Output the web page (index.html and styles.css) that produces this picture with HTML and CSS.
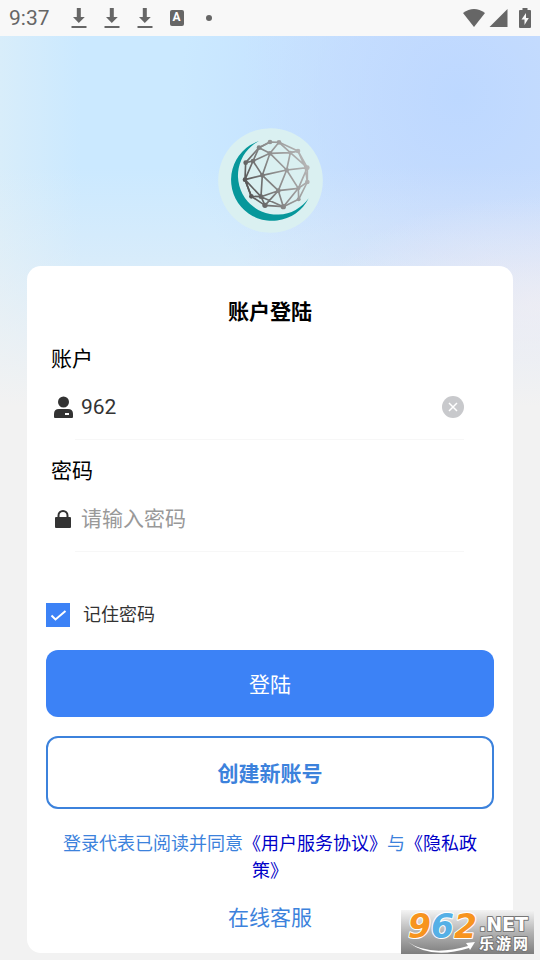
FILE: index.html
```html
<!DOCTYPE html>
<html lang="zh-CN">
<head>
    <meta charset="UTF-8">
    <meta name="viewport" content="width=device-width, initial-scale=1.0">
    <title>账户登陆</title>
    <link rel="stylesheet" href="styles.css">
</head>
<body>

    <!-- Barra de estado -->
    <header class="status-bar">
        <span class="time">9:37</span>
        <div class="status-left">
            <svg class="status-icon" viewBox="0 0 16 22"><path d="M5.800 1h4v9h4L7.800 16 2 10h3.800zM.5 19h15v2H.5z"/></svg>
            <svg class="status-icon" viewBox="0 0 16 22"><path d="M5.800 1h4v9h4L7.800 16 2 10h3.800zM.5 19h15v2H.5z"/></svg>
            <svg class="status-icon" viewBox="0 0 16 22"><path d="M5.800 1h4v9h4L7.800 16 2 10h3.800zM.5 19h15v2H.5z"/></svg>
            <span class="badge-a">A</span>
            <span class="dot"></span>
        </div>
        <div class="status-right">
            <svg width="24" height="20" viewBox="0 0 24 20"><path d="M1 5Q12-3 23 5L12 19z"/></svg>
            <svg width="19" height="20" viewBox="0 0 19 20"><path d="M18.500 1v18H.5z"/></svg>
            <svg class="battery" width="12" height="20" viewBox="0 0 12 20"><path fill-rule="evenodd" d="M3.500 0h5v2H11q1 0 1 1v16q0 1-1 1H1q-1 0-1-1V3q0-1 1-1h2.500zM7 5l-4.500 6.500h3V17L9.800 10H7z"/></svg>
        </div>
    </header>

    <main class="page">
        <svg class="logo" viewBox="24 24 315 315" role="img" aria-label="Logo">
            <defs>
                <linearGradient id="metal" gradientUnits="userSpaceOnUse" x1="105" y1="200" x2="290" y2="130">
                    <stop offset="0" stop-color="#555"/>
                    <stop offset="0.5" stop-color="#8d8d8d"/>
                    <stop offset="1" stop-color="#b5b5b5"/>
                </linearGradient>
            </defs>
            <circle cx="181.500" cy="181.500" r="157" fill="#daf0f1"/>
            <path fill="#07979b" d="M147 63A123 123 0 1 0 296 235A117 117 0 1 1 147 63z"/>
            <g fill="none" stroke="url(#metal)" stroke-width="5" stroke-linejoin="round">
                <path d="M180 66L207 67 264 93 292 143 292 186 266 238 220 260 165 256 124 229 105 179 107 128 147 83z"/>
                <path d="M147 83L180 100 207 67 241 98 264 93M180 66L147 83 129 123 107 128M180 100L241 98 230 150 180 100 129 123 157 166 180 100"/>
                <path d="M241 98L292 143 230 150 265 205 292 143M157 166L230 150 205 212 157 166 105 179 129 123M241 98L264 93 286 143 292 186 265 205 266 238"/>
                <path d="M157 166L153 230 105 179M153 230L205 212 265 205 220 260 205 212 165 256 153 230 124 229M153 230L220 260M105 179L124 229"/>
            </g>
            <g fill="url(#metal)">
                <circle cx="180" cy="66" r="7"/><circle cx="207" cy="67" r="7"/><circle cx="147" cy="83" r="7"/>
                <circle cx="264" cy="93" r="7"/><circle cx="241" cy="98" r="6"/><circle cx="180" cy="100" r="7"/>
                <circle cx="107" cy="128" r="7"/><circle cx="129" cy="123" r="7"/><circle cx="230" cy="150" r="7"/>
                <circle cx="292" cy="143" r="7"/><circle cx="157" cy="166" r="7"/><circle cx="105" cy="179" r="7"/>
                <circle cx="292" cy="186" r="7"/><circle cx="265" cy="205" r="6"/><circle cx="205" cy="212" r="7"/>
                <circle cx="124" cy="229" r="7"/><circle cx="153" cy="230" r="7"/><circle cx="266" cy="238" r="6"/>
                <circle cx="165" cy="256" r="8"/><circle cx="220" cy="260" r="8"/>
            </g>
        </svg>

        <form class="card">
            <h1>账户登陆</h1>

            <div class="field">
                <label for="usuario">账户</label>
                <div class="row">
                    <svg class="field-icon" viewBox="0 0 24 24"><circle cx="12.500" cy="6" r="5.500"/><path fill-rule="evenodd" d="M3 21v-3q0-5 5-5h9q5 0 5 5v3q0 1-1 1H4q-1 0-1-1zM14 17v2h4v-2z"/></svg>
                    <div class="line">
                        <input type="text" id="usuario" value="962">
                        <button type="button" class="clear" aria-label="清除">
                            <svg viewBox="0 0 22 22"><path d="M7 7l8 8M15 7l-8 8"/></svg>
                        </button>
                    </div>
                </div>
            </div>

            <div class="field">
                <label for="password">密码</label>
                <div class="row">
                    <svg class="field-icon" viewBox="0 0 24 24"><path d="M5 9h14q1 0 1 1v9q0 1-1 1H5q-1 0-1-1v-9q0-1 1-1z"/><path class="shackle" d="M7.500 10V7.500a4.500 4.500 0 0 1 9 0V10"/></svg>
                    <div class="line">
                        <input type="password" id="password" placeholder="请输入密码">
                    </div>
                </div>
            </div>

            <div class="remember">
                <input type="checkbox" id="recordar" checked>
                <label for="recordar">记住密码</label>
            </div>

            <button type="submit" class="btn btn-login">登陆</button>
            <button type="button" class="btn btn-create">创建新账号</button>

            <p class="terms">登录代表已阅读并同意<a href="#">《用户服务协议》</a>与<a href="#">《隐私政策》</a></p>
            <a class="service" href="#">在线客服</a>
        </form>
    </main>

    <!-- Marca de agua -->
    <svg class="watermark" viewBox="0 0 133 44">
        <defs>
            <linearGradient id="shade" x1="0" y1="0" x2="0" y2="1">
                <stop offset="0" stop-color="#f4f4f4"/>
                <stop offset="0.5" stop-color="#b4b4b4"/>
                <stop offset="1" stop-color="#7e7e7e"/>
            </linearGradient>
        </defs>
        <rect width="133" height="44" fill="url(#shade)"/>
        <path class="swoosh" d="M7 32Q29 47 67 36L65 33 74 32 69 40 68 38Q30 50 7 32z"/>
        <text class="wm-number" x="7" y="28"><tspan class="orange">9</tspan><tspan class="blue">6</tspan><tspan class="orange">2</tspan></text>
        <text class="wm-net" x="78" y="21">.NET</text>
        <text class="wm-name" x="78 95 112" y="39">乐游网</text>
    </svg>

</body>
</html>
```

FILE: styles.css
```css
* {
    box-sizing: border-box;
}
body {
    margin: 0;
    min-height: 100vh;
    font-family: Roboto, "Noto Sans CJK SC", sans-serif;
    font-size: 21px;
    background-color: #f2f2f2;
}

/* Barra de estado */
.status-bar {
    display: flex;
    align-items: center;
    height: 36px;
    padding: 0 9px;
    background-color: #f8f8f8;
    color: #666;
    fill: #666;
}
.status-left {
    display: flex;
    align-items: center;
    gap: 17px;
    margin-left: 21px;
}
.status-icon {
    width: 16px;
    height: 22px;
}
.badge-a {
    width: 14px;
    height: 16px;
    border-radius: 2px;
    background-color: #666;
    color: #fff;
    font-size: 12px;
    font-weight: bold;
    line-height: 15px;
    text-align: center;
}
.dot {
    width: 6px;
    height: 6px;
    margin-left: 5px;
    border-radius: 50%;
    background-color: #666;
}
.status-right {
    display: flex;
    align-items: center;
    gap: 3px;
    margin-left: auto;
}
.battery {
    margin-left: 8px;
}

.page {
    padding: 92px 27px 7px;
    background-image:
        linear-gradient(to bottom, rgba(242, 242, 242, 0) 130px, rgba(242, 242, 242, 0.3) 220px, #f2f2f2 370px),
        radial-gradient(ellipse at 100% 270px, rgba(240, 234, 244, 0.7) 0, rgba(240, 234, 244, 0) 220px),
        radial-gradient(circle at 85% 60px, #bdd8ff 0, rgba(189, 216, 255, 0) 280px),
        linear-gradient(to right, #d8edfa 0, #cbe9ff 15%, #cbe9ff 45%, #cfe0fd 80%);
    background-size: 100% 400px;
    background-repeat: no-repeat;
}
.logo {
    display: block;
    width: 105px;
    height: 105px;
    margin: 0 auto 33px;
}
.card {
    padding: 31px 19px 20px;
    border-radius: 14px;
    background-color: #fff;
}
h1 {
    margin: 0;
    font-size: 21px;
    line-height: 31px;
    text-align: center;
}

/* Campos */
.field {
    margin-top: 16px;
    padding: 0 30px 0 5px;
}
.field label {
    display: block;
    line-height: 31px;
}
.row {
    display: flex;
    align-items: center;
}
.field-icon {
    width: 24px;
    height: 24px;
    fill: #333;
}
.shackle {
    fill: none;
    stroke: #333;
    stroke-width: 2;
}
.line {
    display: flex;
    flex: 1;
    align-items: center;
    height: 65px;
    padding-left: 6px;
    border-bottom: 1px solid #f7f7f7;
}
.line input {
    flex: 1;
    min-width: 0;
    padding: 0;
    border: none;
    outline: none;
    background: none;
    color: #333;
    font: inherit;
}
.line input::placeholder {
    color: #999;
}
.clear {
    width: 22px;
    height: 22px;
    padding: 0;
    border: none;
    border-radius: 50%;
    background-color: #c8c9cc;
    cursor: pointer;
}
.clear svg {
    display: block;
    stroke: #fff;
    stroke-width: 1.5;
}

.remember {
    display: flex;
    align-items: center;
    gap: 13px;
    height: 24px;
    margin-top: 51px;
    color: #333;
    font-size: 18px;
    line-height: 24px;
}
.remember input {
    appearance: none;
    width: 24px;
    height: 24px;
    margin: 0;
    border: 1px solid #3c82f6;
}
.remember input:checked {
    background: #3c82f6 url("data:image/svg+xml,%3Csvg xmlns='http://www.w3.org/2000/svg' viewBox='0 0 22 22' fill='none' stroke='white' stroke-width='2'%3E%3Cpath d='M4.500 11.500l4 4L18.500 7'/%3E%3C/svg%3E") center / 22px no-repeat;
}

/* Botones */
.btn {
    display: block;
    width: 100%;
    padding: 0 0 2px;
    border-radius: 12px;
    font: inherit;
    cursor: pointer;
}
.btn-login {
    height: 67px;
    margin-top: 23px;
    border: none;
    background-color: #3c82f6;
    color: #fff;
}
.btn-create {
    height: 73px;
    margin-top: 19px;
    border: 2px solid #3c82dc;
    background-color: #fff;
    color: #3c82dc;
    font-weight: bold;
}

.terms {
    margin: 21px 0 19px;
    padding: 0 10px;
    color: #3c82dc;
    font-size: 18px;
    line-height: 27px;
    text-align: center;
}
.terms a {
    color: #0000c8;
    text-decoration: none;
}
.service {
    display: block;
    color: #3c82dc;
    line-height: 30px;
    text-align: center;
    text-decoration: none;
}

/* Marca de agua sobre la tarjeta */
.watermark {
    position: absolute;
    right: 6px;
    top: 910px;
    width: 133px;
    height: 44px;
}
.watermark text {
    paint-order: stroke;
    stroke-linejoin: round;
}
.wm-number {
    font: italic bold 33px "DejaVu Sans", sans-serif;
    stroke: #fff;
    stroke-width: 2px;
}
.orange {
    fill: #f7941e;
}
.blue {
    fill: #55b0e6;
}
.wm-net {
    font: bold 19px "DejaVu Sans", sans-serif;
}
.wm-name {
    font: bold 15px "Noto Sans CJK SC", sans-serif;
}
.wm-net, .wm-name {
    fill: #fff;
    stroke: #777;
    stroke-width: 2px;
}
.swoosh {
    fill: #fff;
}
```
